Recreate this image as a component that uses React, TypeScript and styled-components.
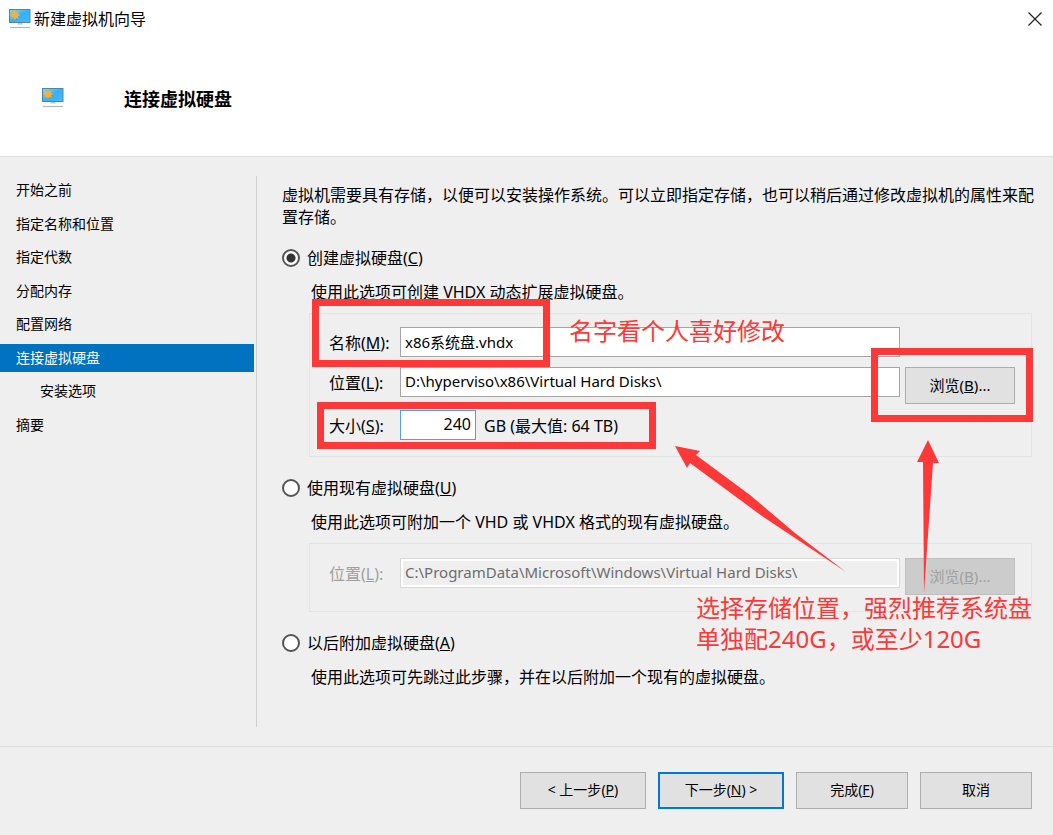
import React, { ReactNode } from "react";
import styled, { createGlobalStyle, css } from "styled-components";

const RED = "#fc3838";

const GlobalStyle = createGlobalStyle`
  *, *::before, *::after { box-sizing: border-box; }
  body {
    margin: 0;
    background: #efefef;
    color: #000;
    font-family: "Noto Sans", "Noto Sans CJK SC", sans-serif;
    font-size: 16px;
    line-height: 22px;
  }
  button, input { font: inherit; color: inherit; }
`;

const Window = styled.div`
  position: relative;
  display: flex;
  flex-direction: column;
  min-height: 100vh;
  background: #efefef;
`;

const Header = styled.header`
  background: #fff;
  border-bottom: 1px solid #dfdfdf;
`;

const TitleBar = styled.div`
  display: flex;
  align-items: center;
  justify-content: space-between;
  height: 38px;
  padding: 0 10px 0 9px;
`;

const TitleGroup = styled.div`
  display: flex;
  align-items: center;
  gap: 3px;
`;

const CloseButton = styled.button`
  display: flex;
  padding: 0;
  border: 0;
  background: none;
`;

const Banner = styled.div`
  display: flex;
  align-items: center;
  gap: 60px;
  height: 118px;
  padding: 3px 42px 0;
`;

const BannerIcon = styled.div`
  display: flex;
  padding-bottom: 2px;
`;

const Heading = styled.h1`
  margin: 0;
  font-size: 18px;
  line-height: 24px;
  font-weight: 700;
`;

const Body = styled.div`
  display: flex;
  flex: 1;
  padding: 19px 0;
`;

const Sidebar = styled.nav`
  flex: 0 0 257px;
  padding-right: 2px;
  border-right: 1px solid #cfcfcf;
`;

const Steps = styled.ol`
  display: flex;
  flex-direction: column;
  justify-content: space-between;
  min-height: 263px;
  margin: 0;
  padding: 0;
  list-style: none;
`;

const StepLink = styled.a<{ $active?: boolean; $nested?: boolean }>`
  display: block;
  padding: 3px 0 3px ${(p) => (p.$nested ? 40 : 16)}px;
  font-size: 14px;
  line-height: 22px;
  text-decoration: none;
  color: ${(p) => (p.$active ? "#fff" : "#000")};
  background: ${(p) => (p.$active ? "#0072c0" : "transparent")};
`;

const Main = styled.main`
  flex: 1;
  min-width: 0;
  padding: 8px 12px 0 25px;
`;

const Intro = styled.p`
  margin: 0 0 19px;
`;

const Option = styled.section`
  margin-bottom: 20px;
`;

const RadioLabel = styled.label`
  display: flex;
  align-items: center;
  gap: 7px;
`;

const Radio = styled.input`
  appearance: none;
  width: 18px;
  height: 18px;
  margin: 0;
  border: 2px solid #555;
  border-radius: 50%;
  background: #fff;
  &:checked {
    background: radial-gradient(circle, #333 0 4px, #fff 5px);
  }
`;

const Description = styled.p`
  margin: 12px 0 10px 29px;
`;

const Group = styled.div<{ $single?: boolean }>`
  display: flex;
  flex-direction: column;
  gap: 6px;
  margin: 0 9px 0 27px;
  padding: ${(p) => (p.$single ? "14px 16px 16px 19px" : "13px 16px 12px 19px")};
  border: 1px solid #e3e3e3;
`;

const Field = styled.div<{ $disabled?: boolean }>`
  display: grid;
  grid-template-columns: 71px 1fr 110px;
  align-items: start;
  min-height: 34px;
  ${(p) => p.$disabled && css`color: #a0a0a0;`}
`;

const FieldLabel = styled.label`
  padding-top: 5px;
`;

const TextBox = styled.input`
  width: calc(100% - 5px);
  height: 30px;
  padding: 0 4px 2px;
  border: 1px solid #a5a5a5;
  border-radius: 0;
  background: #fff;
  font-size: 15px;
  &:disabled {
    border-color: #d8d8d8;
    background: #efefef;
    box-shadow: inset 0 0 0 2px #fff;
    color: #6d6d6d;
  }
`;

const SizeField = styled.div`
  display: flex;
  gap: 8px;
`;

const SizeBox = styled(TextBox)`
  width: 76px;
  border-color: #569de5;
  font-size: 16px;
  text-align: right;
`;

const SizeNote = styled.span`
  padding-top: 5px;
  white-space: nowrap;
`;

const Button = styled.button<{ $wide?: boolean; $primary?: boolean }>`
  width: ${(p) => (p.$wide ? 126 : 112)}px;
  height: 37px;
  padding: 0 0 2px;
  border: ${(p) => (p.$primary ? "2px solid #0078d7" : "1px solid #adadad")};
  background: #e1e1e1;
  font-size: 14px;
  white-space: pre;
`;

const BrowseButton = styled(Button)`
  width: 110px;
  font-size: 15px;
  &:disabled {
    border-color: #bfbfbf;
    background: #ccc;
    color: #a0a0a0;
  }
`;

const Footer = styled.footer`
  display: flex;
  justify-content: flex-end;
  gap: 12px;
  padding: 25px 21px 26px;
  border-top: 1px solid #dfdfdf;
`;

const Annotations = styled.div`
  position: absolute;
  inset: 0;
  overflow: hidden;
  pointer-events: none;
`;

const NameHighlight = styled.div`
  position: absolute;
  left: 312px;
  top: 299px;
  width: 238px;
  height: 68px;
  border: 7px solid ${RED};
`;

const SizeHighlight = styled(NameHighlight)`
  left: 317px;
  top: 402px;
  width: 339px;
  height: 47px;
`;

const BrowseHighlight = styled(NameHighlight)`
  left: auto;
  right: 20px;
  top: 348px;
  width: 162px;
  height: 74px;
`;

const Note = styled.p`
  position: absolute;
  margin: 0;
  color: ${RED};
  font-size: 24px;
  line-height: 31px;
  white-space: nowrap;
`;

const NameNote = styled(Note)`
  left: 569px;
  top: 315px;
`;

const DiskNote = styled(Note)`
  right: 21px;
  top: 592px;
`;

const Arrows = styled.svg`
  position: absolute;
  right: 113px;
  top: 440px;
`;

function MonitorIcon() {
  return (
    <svg width="22" height="20" viewBox="0 0 22 20" aria-hidden="true">
      <defs>
        <linearGradient id="screen" x1="0" y1="0" x2="1" y2="1">
          <stop offset="0" stopColor="#8fd0f5" />
          <stop offset="0.5" stopColor="#35b0f7" />
          <stop offset="1" stopColor="#4db9fa" />
        </linearGradient>
      </defs>
      <rect x="0.5" y="0.5" width="20.5" height="13" fill="url(#screen)" stroke="#4f86a8" />
      <path d="M9 14h4l1 1.500H8z" fill="#b4c6d2" />
      <path d="M1 18.5h20" stroke="#a9b8c2" strokeWidth="1.2" />
      <path d="M6 0.5l1.200 2.900L10 2.200 8.800 5l2.800 1-2.800 1.200L10 10 7.200 8.800 6 11.500 4.800 8.800 2 10l1.200-2.800L0.500 6l2.700-1L2 2.200l2.800 1.200z" fill="#f3b233" />
    </svg>
  );
}

function Key({ children }: { children: ReactNode }) {
  return <>(<u>{children}</u>)</>;
}

const steps = [
  { label: "开始之前" },
  { label: "指定名称和位置" },
  { label: "指定代数" },
  { label: "分配内存" },
  { label: "配置网络" },
  { label: "连接虚拟硬盘", active: true },
  { label: "安装选项", nested: true },
  { label: "摘要" },
];

export default function App() {
  return (
    <Window>
      <GlobalStyle />
      <Header>
        <TitleBar>
          <TitleGroup>
            <MonitorIcon />
            <span>新建虚拟机向导</span>
          </TitleGroup>
          <CloseButton aria-label="关闭">
            <svg width="16" height="16" viewBox="0 0 16 16">
              <path d="M1.500 1.500l13 13M14.500 1.500l-13 13" stroke="#222" strokeWidth="1.200" />
            </svg>
          </CloseButton>
        </TitleBar>
        <Banner>
          <BannerIcon>
            <MonitorIcon />
          </BannerIcon>
          <Heading>连接虚拟硬盘</Heading>
        </Banner>
      </Header>

      <Body>
        <Sidebar>
          <Steps>
            {steps.map((s) => (
              <li key={s.label}>
                <StepLink href="#" $active={s.active} $nested={s.nested}>{s.label}</StepLink>
              </li>
            ))}
          </Steps>
        </Sidebar>
        <Main>
          <Intro>
            虚拟机需要具有存储，以便可以安装操作系统。可以立即指定存储，也可以稍后通过修改虚拟机的属性来配置存储。
          </Intro>

          <Option>
            <RadioLabel>
              <Radio type="radio" name="disk" defaultChecked />
              <span>创建虚拟硬盘<Key>C</Key></span>
            </RadioLabel>
            <Description>使用此选项可创建 VHDX 动态扩展虚拟硬盘。</Description>
            <Group>
              <Field>
                <FieldLabel htmlFor="name">名称<Key>M</Key>:</FieldLabel>
                <TextBox id="name" defaultValue="x86系统盘.vhdx" />
              </Field>
              <Field>
                <FieldLabel htmlFor="location">位置<Key>L</Key>:</FieldLabel>
                <TextBox id="location" defaultValue="D:\hyperviso\x86\Virtual Hard Disks\" />
                <BrowseButton>浏览<Key>B</Key>...</BrowseButton>
              </Field>
              <Field>
                <FieldLabel htmlFor="size">大小<Key>S</Key>:</FieldLabel>
                <SizeField>
                  <SizeBox id="size" defaultValue="240" />
                  <SizeNote>GB (最大值: 64 TB)</SizeNote>
                </SizeField>
              </Field>
            </Group>
          </Option>

          <Option>
            <RadioLabel>
              <Radio type="radio" name="disk" />
              <span>使用现有虚拟硬盘<Key>U</Key></span>
            </RadioLabel>
            <Description>使用此选项可附加一个 VHD 或 VHDX 格式的现有虚拟硬盘。</Description>
            <Group $single>
              <Field $disabled>
                <FieldLabel htmlFor="existing">位置<Key>L</Key>:</FieldLabel>
                <TextBox id="existing" disabled defaultValue="C:\ProgramData\Microsoft\Windows\Virtual Hard Disks\" />
                <BrowseButton disabled>浏览<Key>B</Key>...</BrowseButton>
              </Field>
            </Group>
          </Option>

          <Option>
            <RadioLabel>
              <Radio type="radio" name="disk" />
              <span>以后附加虚拟硬盘<Key>A</Key></span>
            </RadioLabel>
            <Description>使用此选项可先跳过此步骤，并在以后附加一个现有的虚拟硬盘。</Description>
          </Option>
        </Main>
      </Body>

      <Footer>
        <Button $wide>&lt; 上一步<Key>P</Key></Button>
        <Button $wide $primary>下一步<Key>N</Key> &gt;</Button>
        <Button>完成<Key>F</Key></Button>
        <Button>取消</Button>
      </Footer>

      <Annotations>
        <NameHighlight />
        <SizeHighlight />
        <BrowseHighlight />
        <Arrows width="265" height="154" viewBox="0 0 265 154" fill={RED}>
          <path d="M0 6L25 11L21 15L75 55L120 93L171 132L87 76L15 23L12 28Z" />
          <path d="M253 0L264 23L258 23L249 153L248 22L242 22Z" />
        </Arrows>
        <NameNote>名字看个人喜好修改</NameNote>
        <DiskNote>
          选择存储位置，强烈推荐系统盘
          <br />
          单独配240G，或至少120G
        </DiskNote>
      </Annotations>
    </Window>
  );
}
